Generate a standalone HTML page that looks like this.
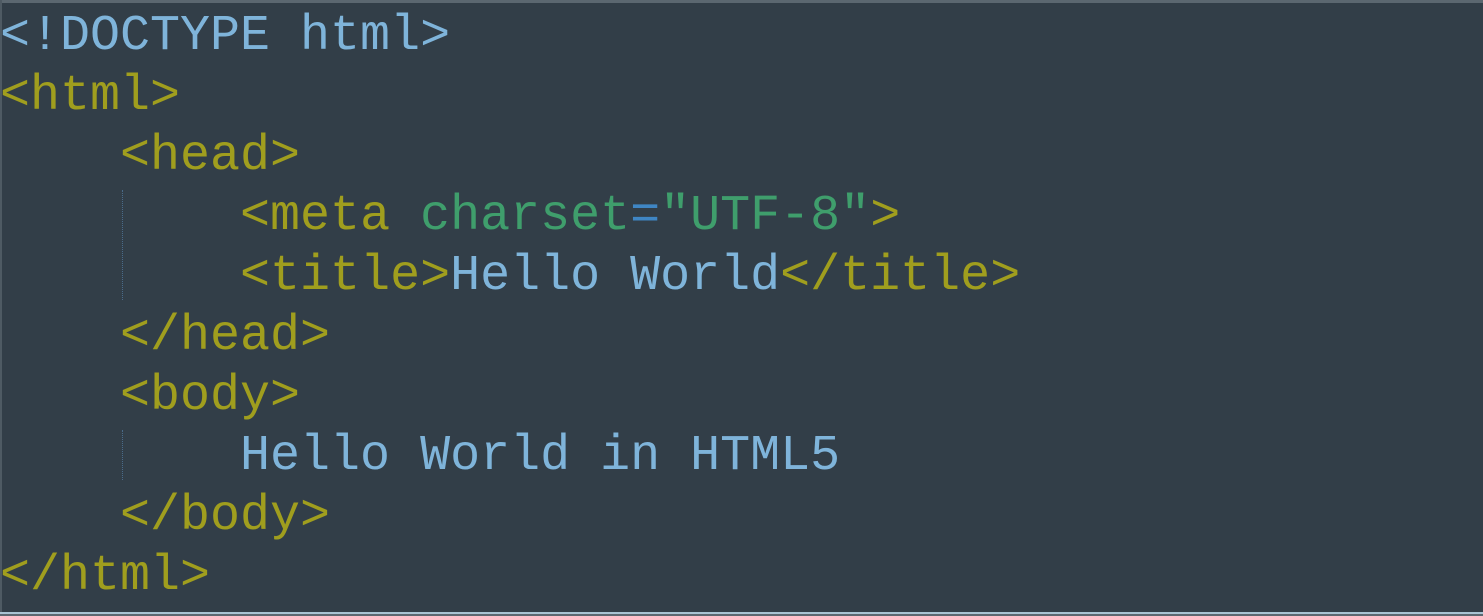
<!DOCTYPE html>
<html><head><style>
html,body{margin:0;padding:0;}
body{width:1483px;height:616px;background:#323e48;position:relative;overflow:hidden;}
.top{position:absolute;left:0;top:0;width:1483px;height:3px;background:#5b6770;}
.left{position:absolute;left:0;top:0;width:2px;height:616px;background:#4e5a63;}
.bot1{position:absolute;left:0;top:612px;width:1483px;height:2px;background:#a9c3d3;}
.bot2{position:absolute;left:0;top:614px;width:1483px;height:2px;background:#5b6770;}
pre{position:absolute;left:0;top:7px;margin:0;font-family:"Liberation Mono",monospace;font-size:50px;line-height:60px;color:#7fb4da;}
.t{color:#a09e1e}.a{color:#3f9e6c}.e{color:#3f86c4}
.g{position:absolute;left:122px;width:0;border-left:1px dotted #4a6b8a;}
</style></head><body>
<div class="top"></div><div class="left"></div>
<div class="g" style="top:190px;height:110px"></div>
<div class="g" style="top:430px;height:50px"></div>
<pre>&lt;!DOCTYPE html&gt;
<span class="t">&lt;html&gt;</span>
    <span class="t">&lt;head&gt;</span>
        <span class="t">&lt;meta</span> <span class="a">charset</span><span class="e">=</span><span class="a">"UTF-8"</span><span class="t">&gt;</span>
        <span class="t">&lt;title&gt;</span>Hello World<span class="t">&lt;/title&gt;</span>
    <span class="t">&lt;/head&gt;</span>
    <span class="t">&lt;body&gt;</span>
        Hello World in HTML5
    <span class="t">&lt;/body&gt;</span>
<span class="t">&lt;/html&gt;</span></pre>
<div class="bot1"></div><div class="bot2"></div>
</body></html>
